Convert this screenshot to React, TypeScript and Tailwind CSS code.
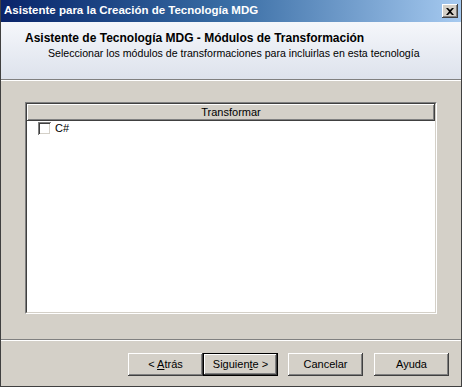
const bevel =
  "shadow-[inset_-1px_-1px_#404040,inset_1px_1px_#ffffff,inset_-2px_-2px_#808080,inset_2px_2px_#d4d0c8]"

function Btn({ children, primary, className = "" }: { children: React.ReactNode; primary?: boolean; className?: string }) {
  return (
    <button
      className={
        (primary
          ? "w-[75px] h-[23px] bg-[#d4d0c8] border border-black shadow-[inset_-1px_-1px_#404040,inset_1px_1px_#ffffff,inset_-2px_-2px_#808080] text-[11px] text-black"
          : "w-[75px] h-[23px] bg-[#d4d0c8] " + bevel + " text-[11px] text-black") +
        " " +
        className
      }
    >
      {children}
    </button>
  )
}

export default function App() {
  return (
    <div className="w-[462px] h-[387px] bg-[#d4d0c8] flex flex-col border-l border-r border-b border-[#404040] font-['Liberation_Sans',Arial,sans-serif] text-black overflow-hidden">
      <div className="h-[22px] shrink-0 flex items-center pl-[3px] pr-[3px] bg-gradient-to-r from-[#0a246a] via-[#3a6ea5] to-[#a6caf0]">
        <span className="text-white font-bold text-[11.5px]">
          Asistente para la Creación de Tecnología MDG
        </span>
        <div className={"ml-auto w-[16px] h-[14px] bg-[#d4d0c8] flex items-center justify-center " + bevel}>
          <svg width="8" height="7" viewBox="0 0 8 7">
            <path d="M0 0h2l2 2 2-2h2L5 3.5 8 7H6L4 5 2 7H0l3-3.5z" fill="#000" />
          </svg>
        </div>
      </div>
      <div className="h-[57px] shrink-0 bg-gradient-to-b from-[#f5f7fb] to-[#dde2ec] pl-[24px] pt-[9px]">
        <div className="font-bold text-[12px] leading-[15px]">
          Asistente de Tecnología MDG - Módulos de Transformación
        </div>
        <div className="pl-[23px] text-[10.6px] leading-[15px]">
          Seleccionar los módulos de transformaciones para incluirlas en esta tecnología
        </div>
      </div>
      <div className="h-[2px] shrink-0 border-t border-[#808080] border-b border-b-white" />
      <div className="flex-1 flex flex-col px-[24px] pt-[21px]">
        <div className="h-[212px] border-t border-l border-[#808080] border-r border-b border-r-white border-b-white">
          <div className="h-full flex flex-col bg-white border-t border-l border-[#404040] border-r border-b border-r-[#d4d0c8] border-b-[#d4d0c8]">
            <div className={"h-[17px] shrink-0 bg-[#d4d0c8] flex items-center justify-center text-[11px] " + bevel}>
              Transformar
            </div>
            <label className="flex items-center gap-[4px] pl-[11px] pt-0 text-[11px] leading-[15px]">
              <span className="w-[13px] h-[13px] bg-white shadow-[inset_1px_1px_#808080,inset_-1px_-1px_#ffffff,inset_2px_2px_#404040,inset_-2px_-2px_#d4d0c8]" />
              <span>C#</span>
            </label>
          </div>
        </div>
        <div className="mt-[25px] -mx-[24px] h-[2px] border-t border-[#808080] border-b border-b-white" />
        <div className="mt-[12px] -mx-[24px] flex items-start pr-[12px] pl-[127px]">
          <Btn>
            &lt; <u>A</u>trás
          </Btn>
          <Btn primary>
            Siguien<u>t</u>e &gt;
          </Btn>
          <Btn className="ml-[10px]">Cancelar</Btn>
          <Btn className="ml-[11px]">Ayuda</Btn>
        </div>
      </div>
    </div>
  )
}
